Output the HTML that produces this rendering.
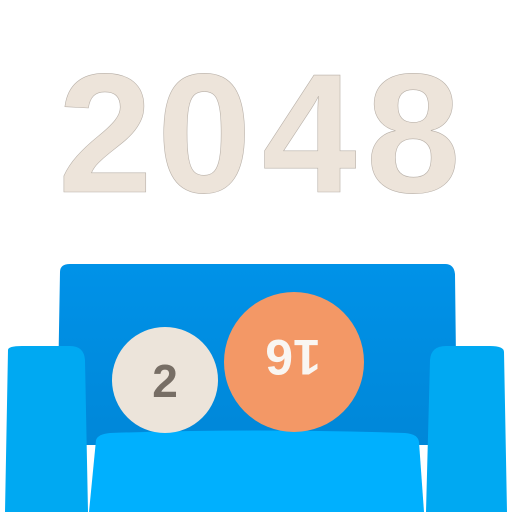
<!DOCTYPE html>
<html><head><style>html,body{margin:0;padding:0;background:#fff;width:512px;height:512px;overflow:hidden}</style></head>
<body>
<svg width="512" height="512" viewBox="0 0 512 512" xmlns="http://www.w3.org/2000/svg">
<g font-family="Liberation Sans, sans-serif" font-weight="bold" font-size="170" fill="#ede4da" stroke="#b8b0a8" stroke-width="0.6">
<text x="58" y="192">2</text>
<text x="157" y="192">0</text>
<text x="262" y="192">4</text>
<text x="366" y="192">8</text>
</g>
<defs>
<linearGradient id="bk" x1="0" y1="0" x2="0" y2="1"><stop offset="0" stop-color="#0092e8"/><stop offset="1" stop-color="#0087d8"/></linearGradient>
</defs>
<path d="M60 272 Q60 264 70 264 L445 264 Q454 264 455 274 L457 445 L57 445 Z" fill="url(#bk)"/>
<path d="M8 350 Q8 346 22 346 L70 346 Q84 346 85 360 L88 512 L5 512 Z" fill="#00a9f2"/>
<path d="M430 360 Q431 346 446 346 L490 346 Q504 346 504 352 L507 512 L426 512 Z" fill="#00a9f2"/>
<path d="M96 440 Q98 434 110 433 Q256 428 405 433 Q418 434 419 442 L424 512 L89 512 Z" fill="#00b0fe"/>
<circle cx="165" cy="380" r="53" fill="#ece4da"/>
<text x="165" y="397" text-anchor="middle" font-family="Liberation Sans, sans-serif" font-weight="bold" font-size="46" fill="#776e65">2</text>
<circle cx="294" cy="362" r="70" fill="#f39866"/>
<text transform="rotate(180 293 358)" x="293" y="376" text-anchor="middle" font-family="Liberation Sans, sans-serif" font-weight="bold" font-size="50" fill="#f9f6f2">16</text>
</svg>
</body></html>
